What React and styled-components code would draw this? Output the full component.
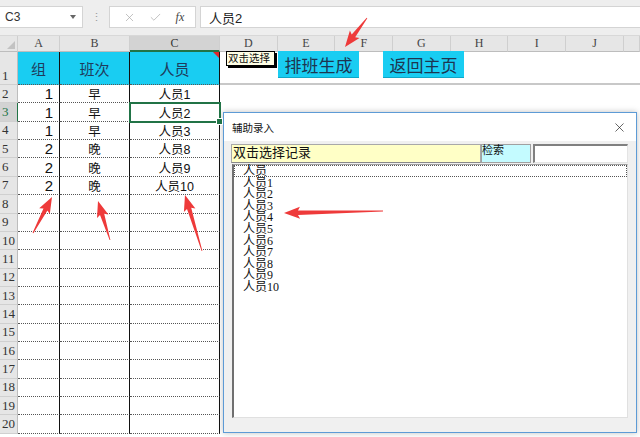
import React from "react";
import styled, { createGlobalStyle } from "styled-components";
import { X, Check } from "lucide-react";

const Global = createGlobalStyle`
  html, body { margin: 0; padding: 0; background: #fff; }
  body { font-family: "Liberation Sans", "Noto Sans CJK SC", sans-serif; }
`;

const CJK = `"Liberation Sans", "Noto Sans CJK SC", sans-serif`;
const CYAN = "#19cdf2";
const GREEN = "#217346";

const Page = styled.div`
  position: relative;
  width: 640px;
  height: 437px;
  overflow: hidden;
  background: #fff;
`;

/* ---------- formula bar ---------- */
const FormulaBar = styled.div`
  height: 36px;
  box-sizing: border-box;
  background: #eeeeee;
  display: flex;
  align-items: center;
  gap: 4px;
  padding: 0 0 1px 0;
  border-bottom: 1px solid #d8d8d8;
`;

const NameBox = styled.div`
  width: 83px;
  height: 22px;
  box-sizing: border-box;
  background: #fff;
  border: 1px solid #d4d4d4;
  border-left: none;
  display: flex;
  align-items: center;
  justify-content: space-between;
  padding: 0 6px 0 5px;
  font-size: 12px;
  color: #333;
`;

const Caret = styled.span`
  width: 0;
  height: 0;
  border-left: 3px solid transparent;
  border-right: 3px solid transparent;
  border-top: 4px solid #666;
`;

const Dots = styled.div`
  width: 18px;
  text-align: center;
  color: #999;
  font-size: 11px;
  letter-spacing: -1px;
`;

const FxBox = styled.div`
  width: 87px;
  height: 22px;
  box-sizing: border-box;
  background: #fff;
  border: 1px solid #d4d4d4;
  display: flex;
  align-items: center;
  justify-content: space-around;
  padding: 0 4px 0 6px;
  color: #aaa;
`;

const Fx = styled.span`
  font-family: "Liberation Serif", serif;
  font-style: italic;
  font-size: 12px;
  color: #444;
`;

const FormulaInput = styled.div`
  flex: 1;
  height: 22px;
  box-sizing: border-box;
  background: #fff;
  border: 1px solid #d4d4d4;
  border-right: none;
  display: flex;
  align-items: center;
  padding-left: 8px;
  font-family: ${CJK};
  font-size: 13px;
  color: #222;
`;

/* ---------- sheet ---------- */
const Sheet = styled.div`
  display: grid;
  grid-template-columns: 18px 42px 70px 90px repeat(7, 57.7px) 1fr;
  grid-template-rows: 16px 33px repeat(19, 18.37px);
`;

const Corner = styled.div`
  background: #e6e6e6;
  border-right: 1px solid #cfcfcf;
  border-bottom: 1px solid #bdbdbd;
  position: relative;
  &::after {
    content: "";
    position: absolute;
    right: 2px;
    bottom: 2px;
    border-left: 8px solid transparent;
    border-bottom: 8px solid #c2c2c2;
  }
`;

const ColHead = styled.div`
  background: ${(p) => (p.$active ? "#d3d3d3" : "#e6e6e6")};
  border-right: 1px solid #cfcfcf;
  border-bottom: ${(p) => (p.$active ? `2px solid ${GREEN}` : "1px solid #bdbdbd")};
  display: flex;
  align-items: center;
  justify-content: center;
  font-family: "Liberation Serif", serif;
  font-size: 12px;
  color: ${(p) => (p.$active ? "#333" : "#444")};
`;

const RowHead = styled.div`
  background: ${(p) => (p.$active ? "#d3d3d3" : "#e6e6e6")};
  border-right: 1px solid ${(p) => (p.$active ? GREEN : "#bdbdbd")};
  border-bottom: 1px solid #d0d0d0;
  display: flex;
  align-items: ${(p) => (p.$tall ? "flex-end" : "center")};
  padding-left: 2px;
  font-family: "Liberation Serif", serif;
  font-size: 13px;
  color: ${(p) => (p.$active ? GREEN : "#333")};
`;

const Cell = styled.div`
  position: relative;
  box-sizing: border-box;
  background: ${(p) => (p.$head ? CYAN : "#fff")};
  border-right: 1px solid #111;
  border-bottom: 1px dotted #555;
  display: flex;
  align-items: center;
  justify-content: ${(p) => p.$align || "center"};
  padding: 0 ${(p) => (p.$align === "flex-end" ? "6px" : "0")} 0 0;
  font-family: ${CJK};
  font-size: ${(p) => (p.$head ? "15px" : p.$big ? "15px" : "12.5px")};
  color: ${(p) => (p.$head ? "#1f3b5c" : "#111")};
  outline: ${(p) => (p.$selected ? `2px solid ${GREEN}` : "none")};
  outline-offset: -1px;
  z-index: ${(p) => (p.$selected ? 2 : 0)};
`;

const Handle = styled.span`
  position: absolute;
  right: -4px;
  bottom: -4px;
  width: 5px;
  height: 5px;
  background: ${GREEN};
  border: 1px solid #fff;
`;

const CommentMark = styled.span`
  position: absolute;
  top: 0;
  right: 0;
  border-left: 6px solid transparent;
  border-top: 6px solid #e0262c;
`;

const Rest = styled.div`
  grid-column: 5 / -1;
  border-bottom: ${(p) => (p.$line ? "2px solid #c8c8c8" : "none")};
`;

/* ---------- overlays on the sheet ---------- */
const Tip = styled.div`
  position: absolute;
  left: 226px;
  top: 51px;
  width: 49px;
  height: 15px;
  box-sizing: border-box;
  background: #ffffe6;
  border: 1px solid #000;
  box-shadow: 2px 2px 0 #000;
  font-family: ${CJK};
  font-size: 10.5px;
  line-height: 13px;
  padding-left: 1px;
  color: #111;
  white-space: nowrap;
  overflow: hidden;
  &::before {
    content: "";
    position: absolute;
    left: -8px;
    top: 1px;
    width: 8px;
    height: 1px;
    background: #000;
  }
`;

const ShapeButton = styled.div`
  position: absolute;
  left: ${(p) => p.$left}px;
  top: 51px;
  width: 81px;
  height: 27px;
  box-sizing: border-box;
  background: ${CYAN};
  border-bottom: 1px solid #10a6c6;
  display: flex;
  align-items: center;
  justify-content: center;
  font-family: "Noto Sans CJK SC", sans-serif;
  font-size: 17px;
  color: #1d3550;
`;

/* ---------- dialog ---------- */
const Dialog = styled.div`
  position: absolute;
  left: 223px;
  top: 112px;
  width: 414px;
  height: 321px;
  box-sizing: border-box;
  border: 1px solid #5d9bd6;
  background: #f0f0f0;
  box-shadow: 0 0 6px rgba(0, 0, 0, 0.25);
  display: flex;
  flex-direction: column;
`;

const TitleBar = styled.div`
  height: 28px;
  background: #fff;
  display: flex;
  align-items: center;
  justify-content: space-between;
  padding: 0 9px 0 8px;
  font-family: ${CJK};
  font-size: 10.5px;
  color: #111;
`;

const DialogBody = styled.div`
  flex: 1;
  display: flex;
  flex-direction: column;
  padding: 3px 8px 14px 7px;
`;

const TopRow = styled.div`
  display: flex;
  height: 19px;
`;

const NoteLabel = styled.div`
  width: 250px;
  box-sizing: border-box;
  background: #ffffc6;
  border: 1px solid #a8a8a8;
  border-bottom: 1px solid #888;
  font-family: ${CJK};
  font-size: 13px;
  line-height: 15px;
  padding-left: 1px;
  color: #111;
`;

const SearchLabel = styled.div`
  width: 50px;
  box-sizing: border-box;
  background: #c4fbff;
  border: 1px solid #a0a0a0;
  font-family: ${CJK};
  font-size: 11px;
  line-height: 11px;
  color: #111;
`;

const SearchInput = styled.div`
  flex: 1;
  margin-left: 2px;
  box-sizing: border-box;
  background: #fff;
  border-top: 2px solid #808080;
  border-left: 2px solid #808080;
  border-right: 1px solid #e4e4e4;
  border-bottom: 1px solid #e4e4e4;
`;

const ListBox = styled.div`
  flex: 1;
  margin: 1px 0 0 1px;
  box-sizing: border-box;
  background: #fff;
  border-top: 1px solid #a0a0a0;
  border-left: 2px solid #707070;
  border-right: 1px solid #e0e0e0;
  border-bottom: 1px solid #e0e0e0;
  padding: 0;
`;

const ListItem = styled.div`
  height: 11.6px;
  line-height: 11px;
  padding-left: 8px;
  font-family: "Liberation Serif", "Noto Sans CJK SC", serif;
  font-size: 12px;
  color: #111;
  box-sizing: border-box;
  border: 1px dotted ${(p) => (p.$focus ? "#555" : "transparent")};
`;

/* ---------- arrows ---------- */
const Arrows = styled.svg`
  position: absolute;
  left: 0;
  top: 0;
  pointer-events: none;
`;

function arrowPoints([tx, ty], [hx, hy]) {
  const dx = hx - tx;
  const dy = hy - ty;
  const len = Math.hypot(dx, dy);
  const ux = dx / len;
  const uy = dy / len;
  const nx = -uy;
  const ny = ux;
  const headLen = 14;
  const bx = hx - ux * headLen;
  const by = hy - uy * headLen;
  const pt = (x, y, w) => [x + nx * w, y + ny * w];
  const pts = [
    pt(tx, ty, 0.4),
    pt(bx, by, 2.2),
    pt(bx - ux * 2, by - uy * 2, 6),
    [hx, hy],
    pt(bx - ux * 2, by - uy * 2, -6),
    pt(bx, by, -2.2),
    pt(tx, ty, -0.4),
  ];
  return pts.map((p) => p.map((v) => v.toFixed(1)).join(",")).join(" ");
}

const arrows = [
  [[367, 18], [345, 47]],
  [[33, 233], [52, 197]],
  [[110, 240], [98, 201]],
  [[202, 251], [185, 195]],
  [[383, 211], [284, 213]],
];

const rows = [
  [1, "早", "人员1"],
  [1, "早", "人员2"],
  [1, "早", "人员3"],
  [2, "晚", "人员8"],
  [2, "晚", "人员9"],
  [2, "晚", "人员10"],
];

const people = ["人员", "人员1", "人员2", "人员3", "人员4", "人员5", "人员6", "人员7", "人员8", "人员9", "人员10"];

const letters = ["A", "B", "C", "D", "E", "F", "G", "H", "I", "J", ""];

export default function App() {
  const body = [];
  for (let r = 2; r <= 20; r++) {
    const d = rows[r - 2] || ["", "", ""];
    body.push(
      <React.Fragment key={r}>
        <RowHead $active={r === 3}>{r}</RowHead>
        <Cell $align="flex-end" $big>{d[0]}</Cell>
        <Cell>{d[1]}</Cell>
        <Cell $selected={r === 3}>
          {d[2]}
          {r === 3 && <Handle />}
        </Cell>
        <Rest />
      </React.Fragment>
    );
  }

  return (
    <Page>
      <Global />
      <FormulaBar>
        <NameBox>
          C3
          <Caret />
        </NameBox>
        <Dots>⋮</Dots>
        <FxBox>
          <X size={13} strokeWidth={1.3} color="#a8a8a8" />
          <Check size={13} strokeWidth={1.3} color="#a8a8a8" />
          <Fx>fx</Fx>
        </FxBox>
        <FormulaInput>人员2</FormulaInput>
      </FormulaBar>

      <Sheet>
        <Corner />
        {letters.map((l) => (
          <ColHead key={l || "k"} $active={l === "C"}>
            {l}
          </ColHead>
        ))}
        <RowHead $tall>1</RowHead>
        <Cell $head>组</Cell>
        <Cell $head>班次</Cell>
        <Cell $head>
          人员
          <CommentMark />
        </Cell>
        <Rest $line />
        {body}
      </Sheet>

      <Tip>双击选择</Tip>
      <ShapeButton $left={278}>排班生成</ShapeButton>
      <ShapeButton $left={383}>返回主页</ShapeButton>

      <Dialog>
        <TitleBar>
          辅助录入
          <X size={15} strokeWidth={1.1} color="#222" />
        </TitleBar>
        <DialogBody>
          <TopRow>
            <NoteLabel>双击选择记录</NoteLabel>
            <SearchLabel>检索</SearchLabel>
            <SearchInput />
          </TopRow>
          <ListBox>
            {people.map((p, i) => (
              <ListItem key={p} $focus={i === 0}>
                {p}
              </ListItem>
            ))}
          </ListBox>
        </DialogBody>
      </Dialog>

      <Arrows width="640" height="437" viewBox="0 0 640 437">
        {arrows.map(([t, h], i) => (
          <polygon key={i} points={arrowPoints(t, h)} fill="#ee3a3a" />
        ))}
      </Arrows>
    </Page>
  );
}
